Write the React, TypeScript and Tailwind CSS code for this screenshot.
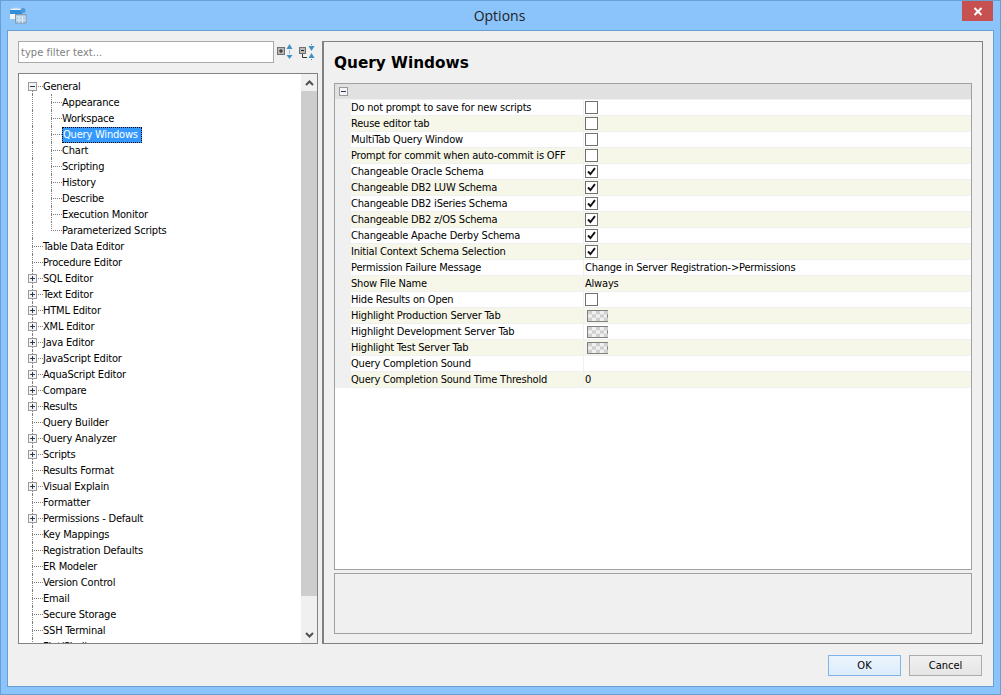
import React from "react";

const font = { fontFamily: '"DejaVu Sans Condensed", "Liberation Sans", sans-serif' };

type Node = { label: string; exp?: "plus" | "minus"; child?: boolean; last?: boolean; sel?: boolean };

const kids = ["Appearance", "Workspace", "Query Windows", "Chart", "Scripting", "History", "Describe", "Execution Monitor", "Parameterized Scripts"];
const tree: Node[] = [
  { label: "General", exp: "minus" },
  ...kids.map((k, i) => ({ label: k, child: true, last: i === kids.length - 1, sel: k === "Query Windows" })),
  { label: "Table Data Editor" },
  { label: "Procedure Editor" },
  { label: "SQL Editor", exp: "plus" },
  { label: "Text Editor", exp: "plus" },
  { label: "HTML Editor", exp: "plus" },
  { label: "XML Editor", exp: "plus" },
  { label: "Java Editor", exp: "plus" },
  { label: "JavaScript Editor", exp: "plus" },
  { label: "AquaScript Editor", exp: "plus" },
  { label: "Compare", exp: "plus" },
  { label: "Results", exp: "plus" },
  { label: "Query Builder" },
  { label: "Query Analyzer", exp: "plus" },
  { label: "Scripts", exp: "plus" },
  { label: "Results Format" },
  { label: "Visual Explain", exp: "plus" },
  { label: "Formatter" },
  { label: "Permissions - Default", exp: "plus" },
  { label: "Key Mappings" },
  { label: "Registration Defaults" },
  { label: "ER Modeler" },
  { label: "Version Control" },
  { label: "Email" },
  { label: "Secure Storage" },
  { label: "SSH Terminal" },
  { label: "Flat/Shell" },
];

type Row = { label: string; check?: boolean; value?: string; swatch?: boolean };
const rows: Row[] = [
  { label: "Do not prompt to save for new scripts", check: false },
  { label: "Reuse editor tab", check: false },
  { label: "MultiTab Query Window", check: false },
  { label: "Prompt for commit when auto-commit is OFF", check: false },
  { label: "Changeable Oracle Schema", check: true },
  { label: "Changeable DB2 LUW Schema", check: true },
  { label: "Changeable DB2 iSeries Schema", check: true },
  { label: "Changeable DB2 z/OS Schema", check: true },
  { label: "Changeable Apache Derby Schema", check: true },
  { label: "Initial Context Schema Selection", check: true },
  { label: "Permission Failure Message", value: "Change in Server Registration->Permissions" },
  { label: "Show File Name", value: "Always" },
  { label: "Hide Results on Open", check: false },
  { label: "Highlight Production Server Tab", swatch: true },
  { label: "Highlight Development Server Tab", swatch: true },
  { label: "Highlight Test Server Tab", swatch: true },
  { label: "Query Completion Sound", value: "" },
  { label: "Query Completion Sound Time Threshold", value: "0" },
];

function Expander({ kind }: { kind: "plus" | "minus" }) {
  return (
    <svg width="9" height="9" viewBox="0 0 9 9" className="absolute left-[-4px] top-[4px] block">
      <rect x="0.5" y="0.5" width="8" height="8" fill="#f4f4f6" stroke="#9a9a9a" />
      <path d="M2 4.5H7" stroke="#2b3a55" />
      {kind === "plus" && <path d="M4.5 2V7" stroke="#2b3a55" />}
    </svg>
  );
}

function Guide({ end, exp, first, width }: { end?: boolean; exp?: "plus" | "minus"; first?: boolean; width: string }) {
  return (
    <div className={`relative h-4 shrink-0 ${width}`}>
      <div className={`absolute left-0 w-0 border-l border-dotted border-[#808080] ${first ? "top-[8px] bottom-0" : end ? "top-0 h-[9px]" : "inset-y-0"}`} />
      <div className="absolute left-0 right-0 top-[8px] h-0 border-t border-dotted border-[#808080]" />
      {exp && <Expander kind={exp} />}
    </div>
  );
}

function TreeRow({ n, i }: { n: Node; i: number }) {
  return (
    <div className="flex h-4 items-center">
      <div className="w-[13px] shrink-0" />
      {n.child ? (
        <>
          <div className="h-4 w-[19px] shrink-0 border-l border-dotted border-[#808080]" />
          <Guide width="w-[11px]" end={n.last} />
        </>
      ) : (
        <Guide width="w-[11px]" exp={n.exp} first={i === 0} />
      )}
      <span
        className={`whitespace-nowrap ${n.sel ? "relative top-px h-4 border border-dotted border-black bg-[#3399ff] pr-[3px] leading-[14px] text-white" : "pt-px leading-[15px] text-black"}`}
      >
        {n.label}
      </span>
    </div>
  );
}

function Check({ on }: { on: boolean }) {
  return (
    <div className="ml-px flex h-[13px] w-[13px] items-center justify-center border border-[#707070] bg-white">
      {on && (
        <svg width="9" height="9" viewBox="0 0 9 9">
          <path d="M1 4.5L3.4 7L8 1.2" fill="none" stroke="#111" strokeWidth="1.9" />
        </svg>
      )}
    </div>
  );
}

function Swatch() {
  const c = [];
  for (let y = 0; y < 3; y++) for (let x = 0; x < 5; x++) if ((x + y) % 2 === 0) c.push(<rect key={`${x}-${y}`} x={1 + x * 4} y={1 + y * 3.3} width="4" height="3.3" fill="#cfcfcf" />);
  return (
    <svg width="21" height="12" viewBox="0 0 21 12" className="ml-[3px] block">
      <rect x="0.5" y="0.5" width="20" height="11" fill="#f0f0f0" stroke="#808080" />
      {c}
    </svg>
  );
}

function ExpandAll() {
  return (
    <svg width="16" height="16" viewBox="0 0 16 16" className="block">
      <rect x="0.5" y="3.5" width="7" height="7" fill="#b8b8b8" stroke="#707070" />
      <path d="M2 7H6M4 5V9" stroke="#222" />
      <path d="M12.5 0L15.5 5H9.5Z" fill="#3f8fc4" />
      <path d="M12.5 15L15.5 11H9.5Z" fill="#3f8fc4" />
      <path d="M12.5 6.5V9.5" stroke="#3f8fc4" strokeDasharray="1 1" />
    </svg>
  );
}

function CollapseAll() {
  return (
    <svg width="16" height="17" viewBox="0 0 16 17" className="block">
      <rect x="0.5" y="3.5" width="6" height="6" fill="#b8b8b8" stroke="#707070" />
      <path d="M2 6.5H5" stroke="#222" />
      <path d="M3.5 10V13.5H8" fill="none" stroke="#333" />
      <path d="M12.5 7L15.5 2H9.5Z" fill="#3f8fc4" />
      <path d="M12.5 9L15.5 14H9.5Z" fill="#3f8fc4" />
      <path d="M12.5 0V1M12.5 15V16" stroke="#3f8fc4" />
    </svg>
  );
}

function AppIcon() {
  return (
    <svg width="18" height="17" viewBox="0 0 18 17" className="block">
      <ellipse cx="7" cy="3" rx="6" ry="2" fill="#e9f2fa" stroke="#b9cfe0" />
      <rect x="1" y="3" width="12" height="9" fill="#2f8fd8" />
      <rect x="1" y="7" width="12" height="5" fill="#f2f6fa" />
      <circle cx="14" cy="3.5" r="2.5" fill="#4c9bd6" />
      <rect x="6.5" y="7.5" width="10.5" height="8.5" fill="#a9cbe6" stroke="#8a9aa8" />
      <path d="M7 10H17M10 10V16M13.5 10V16M7 13H17" stroke="#dfeaf3" />
    </svg>
  );
}

export default function App() {
  return (
    <div style={font} className="flex h-[695px] w-[1001px] flex-col overflow-hidden border border-[#6b9fd4] bg-[#8ac4fa] text-[11px] tracking-[-0.2px]">
      <div className="flex h-[29px] shrink-0 items-start tracking-normal">
        <div className="pl-[8px] pt-[6px]">
          <AppIcon />
        </div>
        <div style={{ fontFamily: '"Open Sans", sans-serif' }} className="flex-1 pl-[10px] pt-[5px] text-center text-[14px] leading-5 text-[#222]">
          Options
        </div>
        <div className="mr-[7px] flex h-[20px] w-[31px] items-center justify-center bg-[#c75050]">
          <svg width="10" height="9" viewBox="0 0 10 9">
            <path d="M1.5 1L8.5 8M8.5 1L1.5 8" stroke="#fff" strokeWidth="2" />
          </svg>
        </div>
      </div>

      <div className="mx-[6px] flex h-[657px] shrink-0 flex-col border border-[#6b9fd4] bg-[#f0f0f0]">
        <div className="flex h-[613px] shrink-0 pl-[10px] pr-[10px] pt-[10px]">
          <div className="flex w-[300px] shrink-0 flex-col">
            <div className="flex h-[22px] shrink-0 items-center">
              <div className="flex h-[22px] w-[256px] items-center border border-[#a9a9a9] bg-white pl-[2px] pt-[2px] tracking-[0.05px] text-[#808080]">
                type filter text...
              </div>
              <div className="ml-[3px]"><ExpandAll /></div>
              <div className="ml-[6px]"><CollapseAll /></div>
            </div>
            <div className="mt-[10px] flex min-h-0 flex-1 border border-[#828282] bg-white">
              <div className="min-w-0 flex-1 overflow-hidden pt-[4px]">
                {tree.map((n, i) => (
                  <TreeRow key={n.label} n={n} i={i} />
                ))}
              </div>
              <div className="flex w-[16px] shrink-0 flex-col bg-[#f0f0f0]">
                <div className="flex h-[17px] items-center justify-center">
                  <svg width="9" height="6" viewBox="0 0 9 6"><path d="M1 5L4.5 1.5L8 5" fill="none" stroke="#505050" strokeWidth="2" /></svg>
                </div>
                <div className="h-[505px] bg-[#cdcdcd]" />
                <div className="flex-1" />
                <div className="flex h-[17px] items-center justify-center">
                  <svg width="9" height="6" viewBox="0 0 9 6"><path d="M1 1L4.5 4.5L8 1" fill="none" stroke="#505050" strokeWidth="2" /></svg>
                </div>
              </div>
            </div>
          </div>

          <div className="ml-[4px] flex min-w-0 flex-1 flex-col border border-[#808080] border-l-2 pl-[10px] pr-[10px]">
            <div style={{ fontFamily: '"DejaVu Sans", sans-serif' }} className="flex h-[41px] shrink-0 items-center pt-[2px] text-[15.3px] font-bold tracking-normal text-black">
              Query Windows
            </div>
            <div className="flex h-[487px] shrink-0 flex-col border border-[#a0a0a0] bg-white">
              <div className="flex h-[15px] shrink-0 items-center bg-[#e1e1e1] pl-[4px]">
                <svg width="9" height="9" viewBox="0 0 9 9" className="block">
                  <rect x="0.5" y="0.5" width="8" height="8" fill="#f4f4f6" stroke="#9a9a9a" />
                  <path d="M2 4.5H7" stroke="#2b3a55" />
                </svg>
              </div>
              <div className="h-px shrink-0 bg-[#f0f0f0]" />
              {rows.map((r, i) => (
                <div key={r.label} className="flex h-4 shrink-0">
                  <div className="w-4 shrink-0 bg-[#f0f0f0]" />
                  <div className={`flex min-w-0 flex-1 border-b border-[#f0f0f0] ${i % 2 ? "bg-[#f7f7e9]" : "bg-white"}`}>
                    <div className="w-[232px] shrink-0 overflow-hidden whitespace-nowrap leading-[15px] text-black">{r.label}</div>
                    <div className="flex flex-1 items-center border-l border-[#f0f0f0] whitespace-nowrap text-black">
                      {r.check !== undefined && <Check on={r.check} />}
                      {r.value !== undefined && <span className="pl-px leading-[15px]">{r.value}</span>}
                      {r.swatch && <Swatch />}
                    </div>
                  </div>
                </div>
              ))}
            </div>
            <div className="mt-[3px] h-[61px] shrink-0 border border-[#a0a0a0] bg-[#f0f0f0]" />
          </div>
        </div>

        <div className="flex flex-1 items-start justify-end gap-[8px] pr-[11px] pt-[11px] tracking-normal">
          <div className="flex h-[21px] w-[73px] items-center justify-center border border-[#7eb4ea] bg-[linear-gradient(#ecf4fc,#dcecfc)] pt-px text-black">OK</div>
          <div className="flex h-[21px] w-[73px] items-center justify-center border border-[#acacac] bg-[linear-gradient(#f0f0f0,#e5e5e5)] pt-px text-black">Cancel</div>
        </div>
      </div>
    </div>
  );
}
